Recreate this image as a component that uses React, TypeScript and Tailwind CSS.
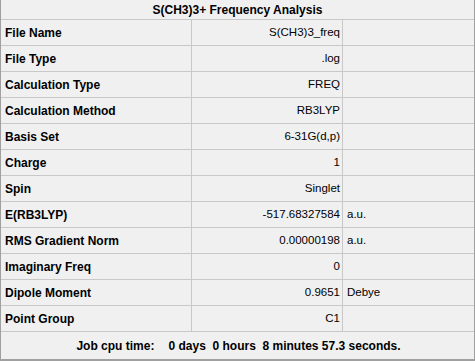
import React from 'react';

const rows: [string, string, string][] = [
  ['File Name', 'S(CH3)3_freq', ''],
  ['File Type', '.log', ''],
  ['Calculation Type', 'FREQ', ''],
  ['Calculation Method', 'RB3LYP', ''],
  ['Basis Set', '6-31G(d,p)', ''],
  ['Charge', '1', ''],
  ['Spin', 'Singlet', ''],
  ['E(RB3LYP)', '-517.68327584', 'a.u.'],
  ['RMS Gradient Norm', '0.00000198', 'a.u.'],
  ['Imaginary Freq', '0', ''],
  ['Dipole Moment', '0.9651', 'Debye'],
  ['Point Group', 'C1', ''],
];

export default function App() {
  return (
    <div
      className="w-[475px] h-[361px] bg-[#f0f0f0] border-l border-r border-b-2 border-[#a0a0a0] text-black flex flex-col"
      style={{ fontFamily: '"Liberation Sans", Arial, sans-serif' }}
    >
      <div className="h-[20px] shrink-0 flex items-center justify-center font-bold text-[12px] border-b border-[#c8c8c8]">
        S(CH3)3+ Frequency Analysis
      </div>
      {rows.map(([label, value, unit]) => (
        <div key={label} className="h-[26px] shrink-0 grid grid-cols-[191px_151px_1fr] border-b border-[#c8c8c8]">
          <div className="flex items-center pl-[4px] font-bold text-[12px] border-r border-[#c8c8c8]">{label}</div>
          <div className="flex items-center justify-end pr-[2px] text-[11.5px] border-r border-[#c8c8c8]">{value}</div>
          <div className="flex items-center pl-[4px] text-[11.5px]">{unit}</div>
        </div>
      ))}
      <div className="flex-1 flex items-center justify-center gap-[14px] font-bold text-[12px] pl-[2px]">
        <span>Job cpu time:</span>
        <span className="whitespace-pre">0 days  0 hours  8 minutes 57.3 seconds.</span>
      </div>
    </div>
  );
}
